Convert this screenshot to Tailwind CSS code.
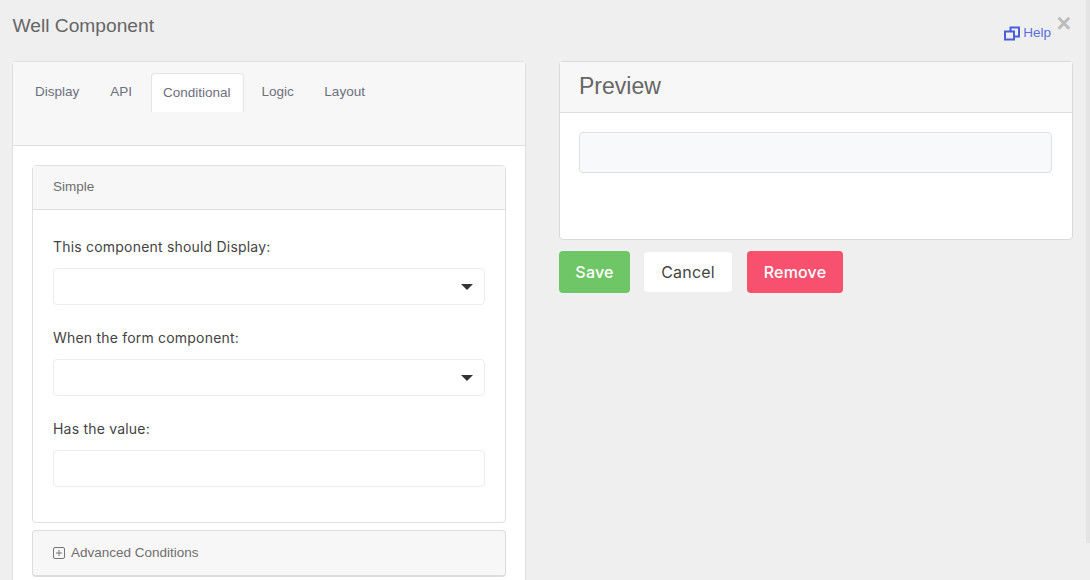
<!DOCTYPE html>
<html lang="en">
<head>
    <meta charset="UTF-8">
    <title>Well Component</title>
    <script src="https://cdn.jsdelivr.net/npm/@tailwindcss/browser@4"></script>
</head>
<body class="relative h-[580px] overflow-hidden bg-[#efefef] font-['Liberation_Sans',sans-serif]">
    <div class="relative h-[580px] w-[1086px] overflow-hidden px-3">
        <!-- header -->
        <div class="flex h-[61px] items-start justify-between">
            <h1 class="mt-[14px] ml-[.5px] text-[19.2px] leading-6 text-[#666666]">Well Component</h1>
            <a class="mt-[25px] mr-[23px] flex items-center gap-[3px] text-[13.5px] leading-4 text-[#5b6ee1]">
                <svg width="16" height="15" viewBox="0 0 16 15" fill="none" stroke="#4a5fdc" stroke-width="2"><path d="M6.5 5V1.5H15v9h-4"/><rect x="1" y="5.5" width="9" height="8"/></svg>
                Help
            </a>
        </div>
        <span class="absolute top-[11px] right-[15px] text-[25px] leading-6 font-bold text-[#bbbbbb]">×</span>

        <div class="flex items-start gap-[33px]">
            <!-- left column -->
            <div class="h-[530px] w-[514px] shrink-0 rounded-t border border-[#dfdfdf] bg-white">
                <div class="h-[84px] border-b border-[#dfdfdf] bg-[#f7f7f7] pt-[11px] pl-[7px]">
                    <ul class="flex text-[13.5px] text-[#6c6f7c]">
                        <li class="flex h-[39px] items-center pr-[15px] pl-[15px]">Display</li>
                        <li class="flex h-[39px] items-center pr-[19px] pl-[16px]">API</li>
                        <li class="flex h-[39px] items-center rounded-t border border-b-0 border-[#e3e3e8] bg-white pr-[12px] pl-[11px]">Conditional</li>
                        <li class="flex h-[39px] items-center pr-[15px] pl-[18px]">Logic</li>
                        <li class="flex h-[39px] items-center px-[15.5px]">Layout</li>
                    </ul>
                </div>
                <div class="px-[19px] pt-[19px]">
                    <div class="h-[358px] rounded border border-[#dfdfe4] bg-white">
                        <div class="flex h-[44px] items-center border-b border-[#dfdfdf] bg-[#f7f7f7] px-5 pb-[1px] text-[13.5px] text-[#6f6f6f]">Simple</div>
                        <div class="px-5 pt-[27px] font-['Inter',sans-serif] text-[14px] tracking-[.2px] text-[#444444]">
                            <label class="block h-[31px] leading-5">This component should Display:</label>
                            <div class="mb-[23px] flex h-[37px] items-center justify-end rounded border border-[#ececf1] bg-white pr-[11px]">
                                <span class="h-0 w-0 border-x-[6px] border-t-[6px] border-x-transparent border-t-[#333333]"></span>
                            </div>
                            <label class="block h-[31px] leading-5">When the form component:</label>
                            <div class="mb-[23px] flex h-[37px] items-center justify-end rounded border border-[#ececf1] bg-white pr-[11px]">
                                <span class="h-0 w-0 border-x-[6px] border-t-[6px] border-x-transparent border-t-[#333333]"></span>
                            </div>
                            <label class="block h-[31px] leading-5">Has the value:</label>
                            <div class="h-[37px] rounded border border-[#ececf1] bg-white"></div>
                        </div>
                    </div>
                    <div class="mt-[7px] flex h-[47px] items-center gap-[6px] rounded border border-b-2 border-[#dcdce2] bg-[#f7f7f7] px-5 text-[13.5px] text-[#6f6f6f]">
                        <svg width="12" height="12" viewBox="0 0 12 12" fill="none" stroke="#777777"><rect x=".5" y=".5" width="11" height="11" rx="1.5"/><path d="M3 6h6M6 3v6"/></svg>
                        Advanced Conditions
                    </div>
                </div>
            </div>

            <!-- right column -->
            <div class="w-[514px] shrink-0">
                <div class="h-[179px] rounded border border-[#d9d9d9] bg-white">
                    <div class="flex h-[51px] items-center border-b border-[#dfdfdf] bg-[#f7f7f7] pr-5 pb-[2px] pl-[19px] text-[23px] text-[#666666]">Preview</div>
                    <div class="pt-[19px] pr-5 pl-[19px]">
                        <div class="h-[41px] rounded border border-[#dedfe4] bg-[#f8f9fb]"></div>
                    </div>
                </div>
                <div class="mt-[11px] flex items-center font-['Inter',sans-serif] text-[16px] font-medium tracking-[.2px]">
                    <button class="h-[42px] w-[71px] rounded bg-[#6fc666] text-white">Save</button>
                    <button class="ml-[14px] h-[40px] w-[88px] rounded bg-white font-normal text-[#444444]">Cancel</button>
                    <button class="ml-[15px] h-[42px] w-[96px] rounded bg-[#f8516f] text-white">Remove</button>
                </div>
            </div>
        </div>
    </div>
    <!-- scrollbar thumb -->
    <div class="absolute top-0 right-0 h-[543px] w-[4px] bg-[#e4e4e4]"></div>
</body>
</html>
